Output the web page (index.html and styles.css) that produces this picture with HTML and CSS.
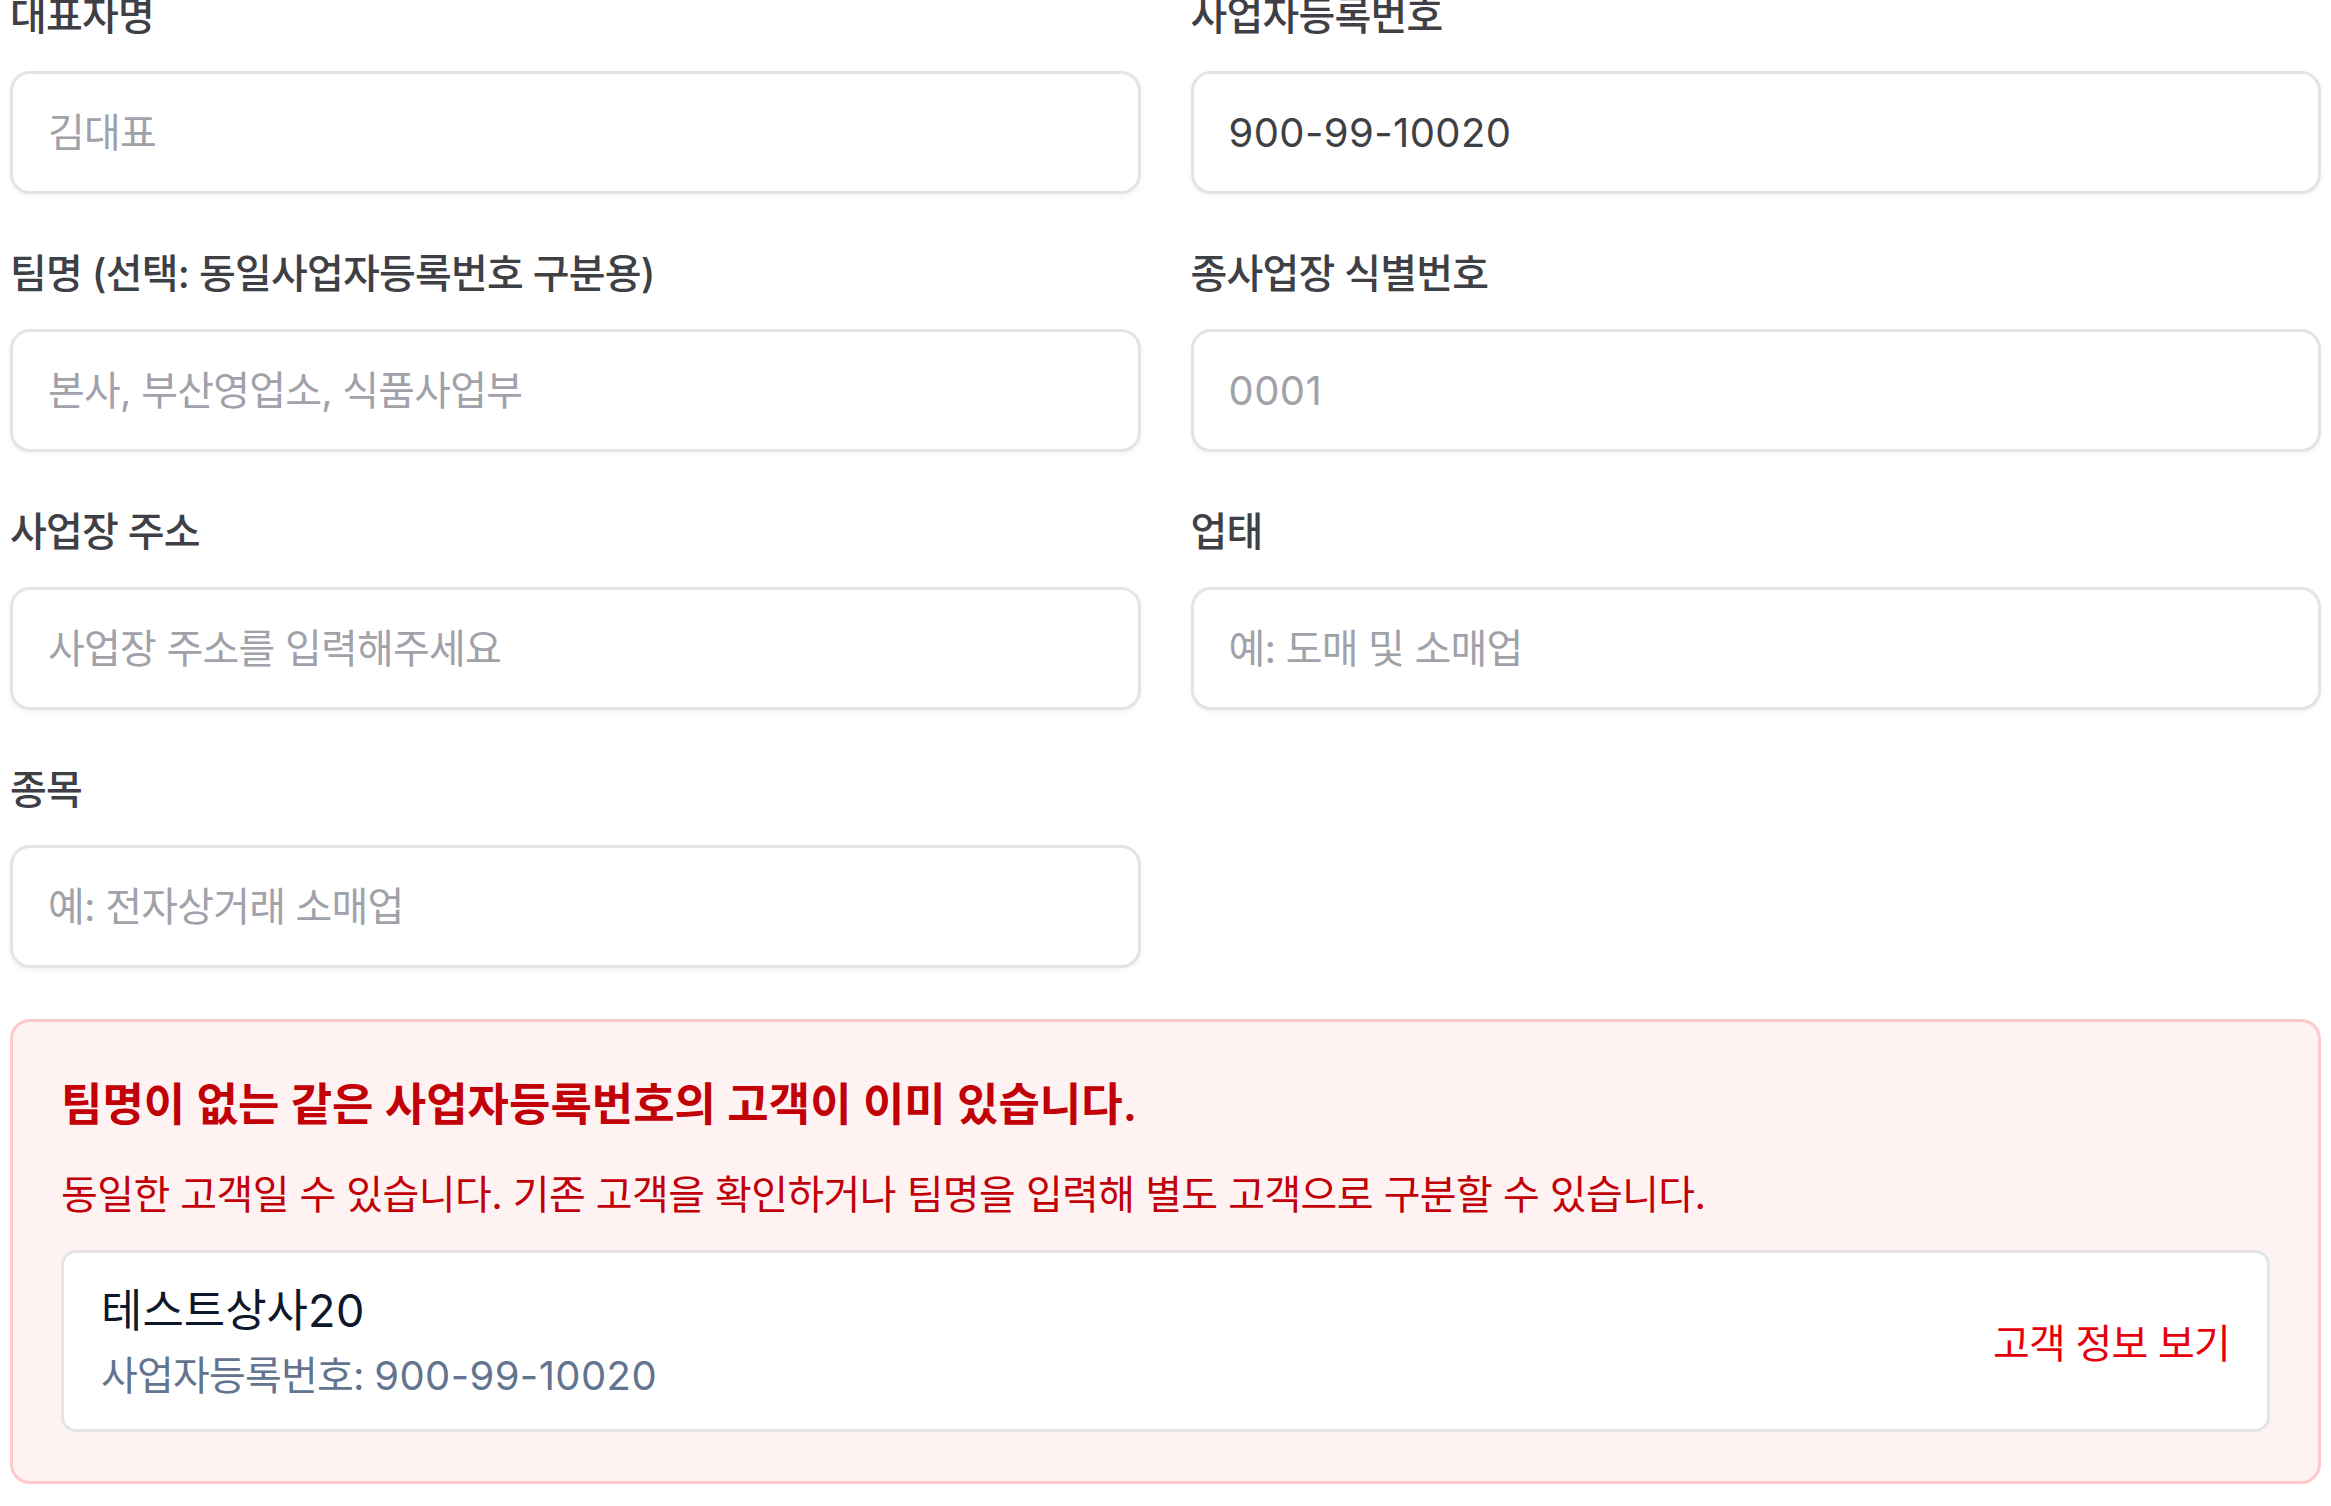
FILE: index.html
```html
<!DOCTYPE html>
<html lang="ko">
<head>
<meta charset="utf-8">
<title>고객 등록</title>
<link rel="stylesheet" href="styles.css">
</head>
<body>
<div class="page">
  <div class="form-grid">
    <div class="field">
      <label class="label">대표자명</label>
      <input class="input" type="text" placeholder="김대표">
    </div>
    <div class="field">
      <label class="label">사업자등록번호</label>
      <input class="input num" type="text" value="900-99-10020">
    </div>
    <div class="field">
      <label class="label">팀명 (선택: 동일사업자등록번호 구분용)</label>
      <input class="input" type="text" placeholder="본사, 부산영업소, 식품사업부">
    </div>
    <div class="field">
      <label class="label">종사업장 식별번호</label>
      <input class="input num" type="text" placeholder="0001">
    </div>
    <div class="field">
      <label class="label">사업장 주소</label>
      <input class="input" type="text" placeholder="사업장 주소를 입력해주세요">
    </div>
    <div class="field">
      <label class="label">업태</label>
      <input class="input" type="text" placeholder="예: 도매 및 소매업">
    </div>
    <div class="field">
      <label class="label">종목</label>
      <input class="input" type="text" placeholder="예: 전자상거래 소매업">
    </div>
  </div>

  <div class="alert">
    <p class="alert-title">팀명이 없는 같은 사업자등록번호의 고객이 이미 있습니다.</p>
    <p class="alert-desc">동일한 고객일 수 있습니다. 기존 고객을 확인하거나 팀명을 입력해 별도 고객으로 구분할 수 있습니다.</p>
    <div class="match-card">
      <div class="match-info">
        <div class="match-name">테스트상사<span class="num">20</span></div>
        <div class="match-sub">사업자등록번호: <span class="num">900-99-10020</span></div>
      </div>
      <a class="match-link" href="#">고객 정보 보기</a>
    </div>
  </div>
</div>
</body>
</html>
```

FILE: styles.css
```css
html, body {
  margin: 0;
  padding: 0;
  background: #ffffff;
  overflow: hidden;
}

body {
  font-family: "Inter", "Noto Sans CJK KR", sans-serif;
  color: #3f3f46;
}

.page {
  padding: 0 10px;
  margin-top: -9px;
}

.form-grid {
  display: grid;
  grid-template-columns: 1fr 1fr;
  column-gap: 50px;
  row-gap: 55px;
}

.field {
  display: flex;
  flex-direction: column;
}

.label {
  font-size: 40px;
  letter-spacing: -0.02em;
  line-height: 50px;
  font-weight: 500;
  color: #3f3f46;
  margin-bottom: 30px;
}

.input {
  box-sizing: border-box;
  height: 123px;
  width: 100%;
  border: 3px solid #e4e4e7;
  border-radius: 20px;
  background: #ffffff;
  box-shadow: 0 2px 5px rgba(0, 0, 0, 0.05);
  padding: 0 35px;
  font-family: "Inter", "Noto Sans CJK KR", sans-serif;
  font-size: 40px;
  letter-spacing: -0.02em;
  color: #3f3f46;
  outline: none;
}

.input::placeholder {
  color: #a1a1aa;
  opacity: 1;
}

.input.num {
  letter-spacing: 0.01em;
}

.alert {
  margin-top: 51px;
  border: 3px solid #ffc9c9;
  border-radius: 20px;
  background: #fef2f2;
  padding: 48px 48px 49px;
}

.alert-title {
  margin: 0 0 25px;
  font-size: 45px;
  line-height: 70px;
  font-weight: 600;
  color: #c10007;
}

.alert-desc {
  margin: 0 0 25px;
  font-size: 40px;
  letter-spacing: -0.015em;
  line-height: 60px;
  color: #c10007;
}

.match-card {
  display: flex;
  align-items: center;
  justify-content: space-between;
  background: #ffffff;
  border: 3px solid #e4e4e7;
  border-radius: 15px;
  padding: 23px 37px;
}

.match-name {
  font-size: 45px;
  line-height: 70px;
  font-weight: 400;
  color: #0f172b;
}

.match-sub {
  font-size: 40px;
  letter-spacing: -0.02em;
  line-height: 60px;
  color: #62748e;
}

.num {
  letter-spacing: 0.01em;
}

.match-link {
  font-size: 40px;
  letter-spacing: -0.02em;
  color: #e7000b;
  text-decoration: none;
}
```
